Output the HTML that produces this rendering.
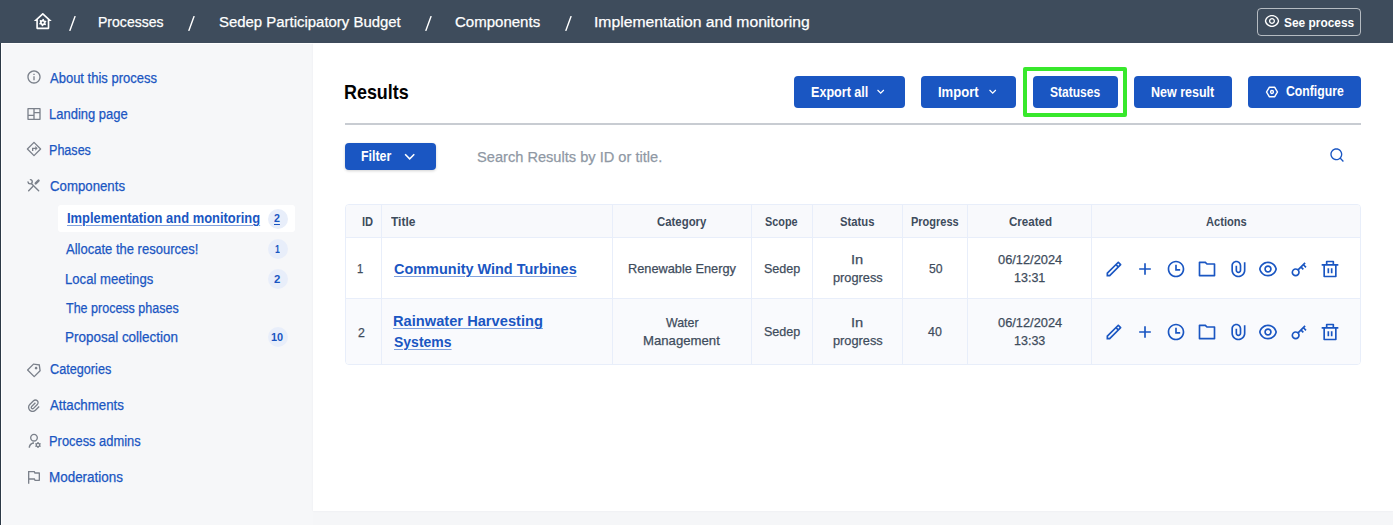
<!DOCTYPE html><html><head><meta charset="utf-8"><style>
html,body{margin:0;padding:0;width:1393px;height:525px;overflow:hidden;background:#f5f6f8;font-family:"Liberation Sans",sans-serif;}
.t{position:absolute;white-space:nowrap;line-height:1;transform-origin:0 0;display:block;-webkit-text-stroke:0.25px currentColor;}
.ic{position:absolute;display:block;}
.box{position:absolute;box-sizing:border-box;}
</style></head><body>
<div class="box" style="left:0;top:0;width:1393px;height:43px;background:#3e4c5c"></div>
<div class="box" style="left:0;top:43px;width:1px;height:482px;background:#2c3947"></div>
<div class="box" style="left:1px;top:43px;width:1px;height:482px;background:#fff"></div>
<div class="box" style="left:1px;top:43px;width:1392px;height:1px;background:#fff"></div>
<div class="box" style="left:2px;top:44px;width:311px;height:481px;background:#f6f7f9"></div>
<div class="box" style="left:313px;top:43px;width:1080px;height:468px;background:#fff;box-shadow:0 0 2px rgba(40,50,70,.06)"></div>
<div class="box" style="left:1256.5px;top:7.5px;width:104.5px;height:28.5px;border:1px solid rgba(255,255,255,.62);border-radius:4px"></div>
<div class="box" style="left:58px;top:205px;width:237px;height:27px;background:#fff;border-radius:3px"></div>
<div class="box" style="left:267.5px;top:208.5px;width:20px;height:20px;border-radius:50%;background:#e8eefa"></div>
<div class="box" style="left:267.5px;top:238.5px;width:20px;height:20px;border-radius:50%;background:#e8eefa"></div>
<div class="box" style="left:267.5px;top:268.5px;width:20px;height:20px;border-radius:50%;background:#e8eefa"></div>
<div class="box" style="left:267.5px;top:326.5px;width:20px;height:20px;border-radius:50%;background:#e8eefa"></div>
<div class="box" style="left:344.5px;top:123px;width:1016.5px;height:2px;background:#c8ccd2"></div>
<div class="box" style="left:794px;top:75.5px;width:111px;height:32px;background:#1a56c2;border-radius:4px"></div>
<div class="box" style="left:921px;top:75.5px;width:95px;height:32px;background:#1a56c2;border-radius:4px"></div>
<div class="box" style="left:1032.5px;top:75.5px;width:85px;height:32px;background:#1a56c2;border-radius:4px"></div>
<div class="box" style="left:1133.5px;top:75.5px;width:98.5px;height:32px;background:#1a56c2;border-radius:4px"></div>
<div class="box" style="left:1248px;top:75.5px;width:113px;height:32px;background:#1a56c2;border-radius:4px"></div>
<div class="box" style="left:1023px;top:67px;width:104px;height:50px;border:4px solid #38e82c;border-radius:2px"></div>
<div class="box" style="left:344.5px;top:142.7px;width:91.5px;height:27.5px;background:#1a56c2;border-radius:4px;box-shadow:0 1px 3px rgba(0,0,0,.18)"></div>
<div class="box" style="left:345px;top:204px;width:1016px;height:161px;border:1px solid #e8eefa;border-radius:4px;background:#fff;overflow:hidden">
<div class="box" style="left:0;top:0;width:100%;height:32px;background:#f8f9fc"></div>
<div class="box" style="left:0;top:94px;width:100%;height:66px;background:#f9fafd"></div>
<div class="box" style="left:0;top:32px;width:100%;height:1px;background:#e8eefa"></div>
<div class="box" style="left:0;top:93px;width:100%;height:1px;background:#e8eefa"></div>
<div class="box" style="left:35px;top:0;width:1px;height:100%;background:#e8eefa"></div>
<div class="box" style="left:266px;top:0;width:1px;height:100%;background:#e8eefa"></div>
<div class="box" style="left:405px;top:0;width:1px;height:100%;background:#e8eefa"></div>
<div class="box" style="left:466px;top:0;width:1px;height:100%;background:#e8eefa"></div>
<div class="box" style="left:556px;top:0;width:1px;height:100%;background:#e8eefa"></div>
<div class="box" style="left:621px;top:0;width:1px;height:100%;background:#e8eefa"></div>
<div class="box" style="left:745px;top:0;width:1px;height:100%;background:#e8eefa"></div>
</div>
<svg class="ic" style="left:26px;top:69.4px;width:16px;height:16px;" viewBox="0 0 24 24"><path fill="#7b818b" d="M12 22C6.47715 22 2 17.5228 2 12C2 6.47715 6.47715 2 12 2C17.5228 2 22 6.47715 22 12C22 17.5228 17.5228 22 12 22ZM12 20C16.4183 20 20 16.4183 20 12C20 7.58172 16.4183 4 12 4C7.58172 4 4 7.58172 4 12C4 16.4183 7.58172 20 12 20ZM11 7H13V9H11V7ZM11 11H13V17H11V11Z"/></svg>
<svg class="ic" style="left:25.7px;top:106px;width:16px;height:16px;" viewBox="0 0 24 24"><path fill="#7b818b" d="M22 20C22 20.5523 21.5523 21 21 21H3C2.44772 21 2 20.5523 2 20V4C2 3.44772 2.44772 3 3 3H21C21.5523 3 22 3.44772 22 4V20ZM11 15H4V19H11V15ZM20 11H13V19H20V11ZM11 5H4V13H11V5ZM20 5H13V9H20V5Z"/></svg>
<svg class="ic" style="left:26px;top:141.4px;width:16px;height:16px;" viewBox="0 0 24 24"><path fill="#7b818b" d="M9 10H14V7.5L17.5 11L14 14.5V12H11V15H9V10Z M12.7071 1.39355L22.6066 11.2931C22.9971 11.6836 22.9971 12.3168 22.6066 12.7073L12.7071 22.6068C12.3166 22.9973 11.6834 22.9973 11.2929 22.6068L1.39339 12.7073C1.00287 12.3168 1.00287 11.6836 1.39339 11.2931L11.2929 1.39355C11.6834 1.00303 12.3166 1.00303 12.7071 1.39355ZM12 3.51487L3.51472 12.0002L12 20.4854L20.4853 12.0002L12 3.51487Z"/></svg>
<svg class="ic" style="left:26px;top:177px;width:16px;height:16px" viewBox="0 0 24 24"><g fill="none" stroke="#7b818b" stroke-width="2.1" stroke-linecap="round"><path d="M8.3 10.3L19 20.8"/><path d="M6.6 3.9A3.2 3.2 0 1 1 3 7.4"/><path d="M4 20.5L10.2 14.3"/><path d="M14.6 9.6L18.8 5.4" stroke-width="3.6"/></g></svg>
<svg class="ic" style="left:26px;top:361.5px;width:16px;height:16px;" viewBox="0 0 24 24"><path fill="#7b818b" d="M10.9042 2.1001L20.8037 3.51431L22.2179 13.4138L13.0255 22.6062C12.635 22.9967 12.0019 22.9967 11.6113 22.6062L1.71184 12.7067C1.32131 12.3162 1.32131 11.683 1.71184 11.2925L10.9042 2.1001ZM11.6113 4.22142L3.83316 11.9996L12.3184 20.4849L20.0966 12.7067L19.036 5.28208L11.6113 4.22142ZM13.7327 10.5854C12.9516 9.80433 12.9516 8.538 13.7327 7.75695C14.5137 6.9759 15.78 6.9759 16.5611 7.75695C17.3421 8.538 17.3421 9.80433 16.5611 10.5854C15.78 11.3664 14.5137 11.3664 13.7327 10.5854Z"/></svg>
<svg class="ic" style="left:26px;top:397.5px;width:16px;height:16px;" viewBox="0 0 24 24"><path fill="#7b818b" d="M14.8287 7.75737L9.1718 13.4142C8.78127 13.8047 8.78127 14.4379 9.1718 14.8284C9.56232 15.219 10.1955 15.219 10.586 14.8284L16.2429 9.17158C17.4144 8.00001 17.4144 6.10052 16.2429 4.92894C15.0713 3.75737 13.1718 3.75737 12.0002 4.92894L6.34337 10.5858C4.39075 12.5384 4.39075 15.7042 6.34337 17.6569C8.29599 19.6095 11.4618 19.6095 13.4144 17.6569L19.0713 12L20.4855 13.4142L14.8287 19.0711C12.095 21.8047 7.66283 21.8047 4.92916 19.0711C2.19549 16.3374 2.19549 11.9053 4.92916 9.17158L10.586 3.51473C12.5386 1.56211 15.7045 1.56211 17.6571 3.51473C19.6097 5.46735 19.6097 8.63317 17.6571 10.5858L12.0002 16.2427C10.8287 17.4142 8.92916 17.4142 7.75759 16.2427C6.58601 15.0711 6.58601 13.1716 7.75759 12L13.4144 6.34316L14.8287 7.75737Z"/></svg>
<svg class="ic" style="left:26px;top:433.4px;width:16px;height:16px;" viewBox="0 0 24 24"><path fill="#7b818b" d="M12 14V16C8.68629 16 6 18.6863 6 22H4C4 17.5817 7.58172 14 12 14ZM12 13C8.685 13 6 10.315 6 7C6 3.685 8.685 1 12 1C15.315 1 18 3.685 18 7C18 10.315 15.315 13 12 13ZM12 11C14.21 11 16 9.21 16 7C16 4.79 14.21 3 12 3C9.79 3 8 4.79 8 7C8 9.21 9.79 11 12 11ZM14.5946 18.8115C14.5327 18.5511 14.5 18.2794 14.5 18C14.5 17.7207 14.5327 17.449 14.5945 17.1886L13.6029 16.6161L14.6029 14.884L15.5952 15.4569C15.9883 15.0851 16.4676 14.8034 17 14.6449V13.5H19V14.6449C19.5324 14.8034 20.0116 15.0851 20.4047 15.4569L21.3971 14.8839L22.3972 16.616L21.4055 17.1885C21.4673 17.449 21.5 17.7207 21.5 18C21.5 18.2793 21.4673 18.551 21.4055 18.8114L22.3972 19.3839L21.3972 21.116L20.4048 20.543C20.0117 20.9149 19.5325 21.1966 19.0001 21.355V22.5H17.0001V21.3551C16.4677 21.1967 15.9884 20.915 15.5953 20.5431L14.603 21.1161L13.6029 19.384L14.5946 18.8115ZM18 19.5C18.8284 19.5 19.5 18.8284 19.5 18C19.5 17.1716 18.8284 16.5 18 16.5C17.1716 16.5 16.5 17.1716 16.5 18C16.5 18.8284 17.1716 19.5 18 19.5Z"/></svg>
<svg class="ic" style="left:26px;top:469px;width:16px;height:16px;" viewBox="0 0 24 24"><path fill="#7b818b" d="M5 16V22H3V3H12.382C12.7607 3 13.107 3.214 13.2764 3.55279L14 5H20C20.5523 5 21 5.44772 21 6V17C21 17.5523 20.5523 18 20 18H13.618C13.2393 18 12.893 17.786 12.7236 17.4472L12 16H5ZM5 5V14H13.2361L14.2361 16H19V7H12.7639L11.7639 5H5Z"/></svg>
<svg class="ic" style="left:1328.9px;top:146.7px;width:16px;height:16px;" viewBox="0 0 24 24"><path fill="#1a56c2" d="M18.031 16.6168L22.3137 20.8995L20.8995 22.3137L16.6168 18.031C15.0769 19.263 13.124 20 11 20C6.032 20 2 15.968 2 11C2 6.032 6.032 2 11 2C15.968 2 20 6.032 20 11C20 13.124 19.263 15.0769 18.031 16.6168ZM16.0247 15.8748C17.2475 14.6146 18 12.8956 18 11C18 7.1325 14.8675 4 11 4C7.1325 4 4 7.1325 4 11C4 14.8675 7.1325 18 11 18C12.8956 18 14.6146 17.2475 15.8748 16.0247L16.0247 15.8748Z"/></svg>
<svg class="ic" style="left:1263.6px;top:13.2px;width:16px;height:16px;" viewBox="0 0 24 24"><path fill="#fff" d="M12.0003 3C17.3924 3 21.8784 6.87976 22.8189 12C21.8784 17.1202 17.3924 21 12.0003 21C6.60812 21 2.12215 17.1202 1.18164 12C2.12215 6.87976 6.60812 3 12.0003 3ZM12.0003 19C16.2359 19 19.8603 16.052 20.7777 12C19.8603 7.94803 16.2359 5 12.0003 5C7.7646 5 4.14022 7.94803 3.22278 12C4.14022 16.052 7.7646 19 12.0003 19ZM12.0003 16.5C9.51498 16.5 7.50026 14.4853 7.50026 12C7.50026 9.51472 9.51498 7.5 12.0003 7.5C14.4855 7.5 16.5003 9.51472 16.5003 12C16.5003 14.4853 14.4855 16.5 12.0003 16.5ZM12.0003 14.5C13.381 14.5 14.5003 13.3807 14.5003 12C14.5003 10.6193 13.381 9.5 12.0003 9.5C10.6196 9.5 9.50026 10.6193 9.50026 12C9.50026 13.3807 10.6196 14.5 12.0003 14.5Z"/></svg>
<svg class="ic" style="left:874.4px;top:84.7px;width:13.4px;height:13.4px;" viewBox="0 0 24 24"><path fill="#fff" d="M12 13.1717L16.9497 8.22192L18.3639 9.63614L12 16.0001L5.63604 9.63614L7.05025 8.22192L12 13.1717Z"/></svg>
<svg class="ic" style="left:985.6px;top:84.7px;width:13.4px;height:13.4px;" viewBox="0 0 24 24"><path fill="#fff" d="M12 13.1717L16.9497 8.22192L18.3639 9.63614L12 16.0001L5.63604 9.63614L7.05025 8.22192L12 13.1717Z"/></svg>
<svg class="ic" style="left:400.4px;top:146.6px;width:19.4px;height:19.4px;" viewBox="0 0 24 24"><path fill="#fff" d="M12 13.1717L16.9497 8.22192L18.3639 9.63614L12 16.0001L5.63604 9.63614L7.05025 8.22192L12 13.1717Z"/></svg>
<svg class="ic" style="left:68.8px;top:15.5px;width:7px;height:16px" viewBox="0 0 7 16"><path d="M0.9 14.4L6.0 0.6" stroke="#fff" stroke-width="1.4" stroke-linecap="round" fill="none"/></svg>
<svg class="ic" style="left:188.4px;top:15.5px;width:7px;height:16px" viewBox="0 0 7 16"><path d="M0.9 14.4L6.0 0.6" stroke="#fff" stroke-width="1.4" stroke-linecap="round" fill="none"/></svg>
<svg class="ic" style="left:424.8px;top:15.5px;width:7px;height:16px" viewBox="0 0 7 16"><path d="M0.9 14.4L6.0 0.6" stroke="#fff" stroke-width="1.4" stroke-linecap="round" fill="none"/></svg>
<svg class="ic" style="left:565px;top:15.5px;width:7px;height:16px" viewBox="0 0 7 16"><path d="M0.9 14.4L6.0 0.6" stroke="#fff" stroke-width="1.4" stroke-linecap="round" fill="none"/></svg>
<svg class="ic" style="left:33.2px;top:11.5px;width:19.6px;height:19.6px" viewBox="0 0 24 24"><path fill="#fff" fill-rule="evenodd" d="M19 21H5C4.45 21 4 20.55 4 20V11H1L11.33 1.61C11.71 1.26 12.29 1.26 12.67 1.61L23 11H20V20C20 20.55 19.55 21 19 21ZM6 19H18V9.16L12 3.7L6 9.16V19Z"/><path fill="#fff" fill-rule="evenodd" d="M12.00 8.40L13.19 8.56L13.70 10.06L14.40 10.60L15.98 10.70L16.44 11.81L15.40 13.00L15.28 13.88L15.98 15.30L15.25 16.25L13.70 15.94L12.88 16.28L12.00 17.60L10.81 17.44L10.30 15.94L9.60 15.40L8.02 15.30L7.56 14.19L8.60 13.00L8.72 12.12L8.02 10.70L8.75 9.75L10.30 10.06L11.12 9.72ZM13.3 13.0A1.3 1.3 0 1 0 10.7 13.0A1.3 1.3 0 1 0 13.3 13.0Z"/></svg>
<svg class="ic" style="left:1264px;top:83.5px;width:16px;height:16px" viewBox="0 0 24 24"><path d="M20.20 12.00L16.10 19.10L7.90 19.10L3.80 12.00L7.90 4.90L16.10 4.90Z" fill="none" stroke="#fff" stroke-width="2.2" stroke-linejoin="round"/><circle cx="12" cy="12" r="2.2" fill="none" stroke="#fff" stroke-width="2"/></svg>
<svg class="ic" style="left:1104.3px;top:259.35px;width:20px;height:20px;" viewBox="0 0 24 24"><path fill="#1a56c2" d="M15.7279 9.57627L14.3137 8.16206L5 17.4758V18.89H6.41421L15.7279 9.57627ZM17.1421 8.16206L18.5563 6.74785L17.1421 5.33363L15.7279 6.74785L17.1421 8.16206ZM7.24264 20.89H3V16.6473L16.435 3.21231C16.8256 2.82179 17.4587 2.82179 17.8492 3.21231L20.6777 6.04074C21.0682 6.43126 21.0682 7.06443 20.6777 7.45495L7.24264 20.89Z"/></svg>
<svg class="ic" style="left:1104.3px;top:322.3px;width:20px;height:20px;" viewBox="0 0 24 24"><path fill="#1a56c2" d="M15.7279 9.57627L14.3137 8.16206L5 17.4758V18.89H6.41421L15.7279 9.57627ZM17.1421 8.16206L18.5563 6.74785L17.1421 5.33363L15.7279 6.74785L17.1421 8.16206ZM7.24264 20.89H3V16.6473L16.435 3.21231C16.8256 2.82179 17.4587 2.82179 17.8492 3.21231L20.6777 6.04074C21.0682 6.43126 21.0682 7.06443 20.6777 7.45495L7.24264 20.89Z"/></svg>
<svg class="ic" style="left:1135.1px;top:259.35px;width:20px;height:20px;" viewBox="0 0 24 24"><path fill="#1a56c2" d="M11 11V5H13V11H19V13H13V19H11V13H5V11H11Z"/></svg>
<svg class="ic" style="left:1135.1px;top:322.3px;width:20px;height:20px;" viewBox="0 0 24 24"><path fill="#1a56c2" d="M11 11V5H13V11H19V13H13V19H11V13H5V11H11Z"/></svg>
<svg class="ic" style="left:1165.8999999999999px;top:259.35px;width:20px;height:20px;" viewBox="0 0 24 24"><path fill="#1a56c2" d="M12 22C6.47715 22 2 17.5228 2 12C2 6.47715 6.47715 2 12 2C17.5228 2 22 6.47715 22 12C22 17.5228 17.5228 22 12 22ZM12 20C16.4183 20 20 16.4183 20 12C20 7.58172 16.4183 4 12 4C7.58172 4 4 7.58172 4 12C4 16.4183 7.58172 20 12 20ZM13 12H17V14H11V7H13V12Z"/></svg>
<svg class="ic" style="left:1165.8999999999999px;top:322.3px;width:20px;height:20px;" viewBox="0 0 24 24"><path fill="#1a56c2" d="M12 22C6.47715 22 2 17.5228 2 12C2 6.47715 6.47715 2 12 2C17.5228 2 22 6.47715 22 12C22 17.5228 17.5228 22 12 22ZM12 20C16.4183 20 20 16.4183 20 12C20 7.58172 16.4183 4 12 4C7.58172 4 4 7.58172 4 12C4 16.4183 7.58172 20 12 20ZM13 12H17V14H11V7H13V12Z"/></svg>
<svg class="ic" style="left:1196.7px;top:259.35px;width:20px;height:20px;" viewBox="0 0 24 24"><path fill="#1a56c2" d="M4 5V19H20V7H11.5858L9.58579 5H4ZM12.4142 5H21C21.5523 5 22 5.44772 22 6V20C22 20.5523 21.5523 21 21 21H3C2.44772 21 2 20.5523 2 20V4C2 3.44772 2.44772 3 3 3H10.4142L12.4142 5Z"/></svg>
<svg class="ic" style="left:1196.7px;top:322.3px;width:20px;height:20px;" viewBox="0 0 24 24"><path fill="#1a56c2" d="M4 5V19H20V7H11.5858L9.58579 5H4ZM12.4142 5H21C21.5523 5 22 5.44772 22 6V20C22 20.5523 21.5523 21 21 21H3C2.44772 21 2 20.5523 2 20V4C2 3.44772 2.44772 3 3 3H10.4142L12.4142 5Z"/></svg>
<svg class="ic" style="left:1227.5px;top:259.35px;width:20px;height:20px;" viewBox="0 0 24 24"><path fill="#1a56c2" d="M14 13.5V8C14 5.79086 12.2091 4 10 4C7.79086 4 6 5.79086 6 8V13.5C6 17.0899 8.91015 20 12.5 20C16.0899 20 19 17.0899 19 13.5V4H21V13.5C21 18.1944 17.1944 22 12.5 22C7.80558 22 4 18.1944 4 13.5V8C4 4.68629 6.68629 2 10 2C13.3137 2 16 4.68629 16 8V13.5C16 15.433 14.433 17 12.5 17C10.567 17 9 15.433 9 13.5V8H11V13.5C11 14.3284 11.6716 15 12.5 15C13.3284 15 14 14.3284 14 13.5Z"/></svg>
<svg class="ic" style="left:1227.5px;top:322.3px;width:20px;height:20px;" viewBox="0 0 24 24"><path fill="#1a56c2" d="M14 13.5V8C14 5.79086 12.2091 4 10 4C7.79086 4 6 5.79086 6 8V13.5C6 17.0899 8.91015 20 12.5 20C16.0899 20 19 17.0899 19 13.5V4H21V13.5C21 18.1944 17.1944 22 12.5 22C7.80558 22 4 18.1944 4 13.5V8C4 4.68629 6.68629 2 10 2C13.3137 2 16 4.68629 16 8V13.5C16 15.433 14.433 17 12.5 17C10.567 17 9 15.433 9 13.5V8H11V13.5C11 14.3284 11.6716 15 12.5 15C13.3284 15 14 14.3284 14 13.5Z"/></svg>
<svg class="ic" style="left:1258.3px;top:259.35px;width:20px;height:20px;" viewBox="0 0 24 24"><path fill="#1a56c2" d="M12.0003 3C17.3924 3 21.8784 6.87976 22.8189 12C21.8784 17.1202 17.3924 21 12.0003 21C6.60812 21 2.12215 17.1202 1.18164 12C2.12215 6.87976 6.60812 3 12.0003 3ZM12.0003 19C16.2359 19 19.8603 16.052 20.7777 12C19.8603 7.94803 16.2359 5 12.0003 5C7.7646 5 4.14022 7.94803 3.22278 12C4.14022 16.052 7.7646 19 12.0003 19ZM12.0003 16.5C9.51498 16.5 7.50026 14.4853 7.50026 12C7.50026 9.51472 9.51498 7.5 12.0003 7.5C14.4855 7.5 16.5003 9.51472 16.5003 12C16.5003 14.4853 14.4855 16.5 12.0003 16.5ZM12.0003 14.5C13.381 14.5 14.5003 13.3807 14.5003 12C14.5003 10.6193 13.381 9.5 12.0003 9.5C10.6196 9.5 9.50026 10.6193 9.50026 12C9.50026 13.3807 10.6196 14.5 12.0003 14.5Z"/></svg>
<svg class="ic" style="left:1258.3px;top:322.3px;width:20px;height:20px;" viewBox="0 0 24 24"><path fill="#1a56c2" d="M12.0003 3C17.3924 3 21.8784 6.87976 22.8189 12C21.8784 17.1202 17.3924 21 12.0003 21C6.60812 21 2.12215 17.1202 1.18164 12C2.12215 6.87976 6.60812 3 12.0003 3ZM12.0003 19C16.2359 19 19.8603 16.052 20.7777 12C19.8603 7.94803 16.2359 5 12.0003 5C7.7646 5 4.14022 7.94803 3.22278 12C4.14022 16.052 7.7646 19 12.0003 19ZM12.0003 16.5C9.51498 16.5 7.50026 14.4853 7.50026 12C7.50026 9.51472 9.51498 7.5 12.0003 7.5C14.4855 7.5 16.5003 9.51472 16.5003 12C16.5003 14.4853 14.4855 16.5 12.0003 16.5ZM12.0003 14.5C13.381 14.5 14.5003 13.3807 14.5003 12C14.5003 10.6193 13.381 9.5 12.0003 9.5C10.6196 9.5 9.50026 10.6193 9.50026 12C9.50026 13.3807 10.6196 14.5 12.0003 14.5Z"/></svg>
<svg class="ic" style="left:1289.1px;top:259.35px;width:20px;height:20px;" viewBox="0 0 24 24"><path fill="#1a56c2" d="M10.7577 11.8281L18.6066 3.97919L20.0208 5.3934L18.6066 6.80761L21.0815 9.28249L19.6673 10.6967L17.1924 8.22183L15.7782 9.63604L17.8995 11.7574L16.4853 13.1716L14.364 11.0503L12.1719 13.2423C13.4581 15.1837 13.246 17.8251 11.5355 19.5355C9.58291 21.4882 6.41709 21.4882 4.46447 19.5355C2.51184 17.5829 2.51184 14.4171 4.46447 12.4645C6.17493 10.754 8.81633 10.5419 10.7577 11.8281ZM10.1213 18.1213C11.2929 16.9497 11.2929 15.0503 10.1213 13.8787C8.94975 12.7071 7.05025 12.7071 5.87868 13.8787C4.70711 15.0503 4.70711 16.9497 5.87868 18.1213C7.05025 19.2929 8.94975 19.2929 10.1213 18.1213Z"/></svg>
<svg class="ic" style="left:1289.1px;top:322.3px;width:20px;height:20px;" viewBox="0 0 24 24"><path fill="#1a56c2" d="M10.7577 11.8281L18.6066 3.97919L20.0208 5.3934L18.6066 6.80761L21.0815 9.28249L19.6673 10.6967L17.1924 8.22183L15.7782 9.63604L17.8995 11.7574L16.4853 13.1716L14.364 11.0503L12.1719 13.2423C13.4581 15.1837 13.246 17.8251 11.5355 19.5355C9.58291 21.4882 6.41709 21.4882 4.46447 19.5355C2.51184 17.5829 2.51184 14.4171 4.46447 12.4645C6.17493 10.754 8.81633 10.5419 10.7577 11.8281ZM10.1213 18.1213C11.2929 16.9497 11.2929 15.0503 10.1213 13.8787C8.94975 12.7071 7.05025 12.7071 5.87868 13.8787C4.70711 15.0503 4.70711 16.9497 5.87868 18.1213C7.05025 19.2929 8.94975 19.2929 10.1213 18.1213Z"/></svg>
<svg class="ic" style="left:1319.8999999999999px;top:259.35px;width:20px;height:20px;" viewBox="0 0 24 24"><path fill="#1a56c2" d="M17 6H22V8H20V21C20 21.5523 19.5523 22 19 22H5C4.44772 22 4 21.5523 4 21V8H2V6H7V3C7 2.44772 7.44772 2 8 2H16C16.5523 2 17 2.44772 17 3V6ZM18 8H6V20H18V8ZM9 11H11V17H9V11ZM13 11H15V17H13V11ZM9 4V6H15V4H9Z"/></svg>
<svg class="ic" style="left:1319.8999999999999px;top:322.3px;width:20px;height:20px;" viewBox="0 0 24 24"><path fill="#1a56c2" d="M17 6H22V8H20V21C20 21.5523 19.5523 22 19 22H5C4.44772 22 4 21.5523 4 21V8H2V6H7V3C7 2.44772 7.44772 2 8 2H16C16.5523 2 17 2.44772 17 3V6ZM18 8H6V20H18V8ZM9 11H11V17H9V11ZM13 11H15V17H13V11ZM9 4V6H15V4H9Z"/></svg>
<span id="h_proc" class="t" style="left:98.49px;top:14.35px;font-size:15.5px;font-weight:400;color:#fff;transform:scaleX(0.9063);">Processes</span>
<span id="h_sedep" class="t" style="left:218.60px;top:14.35px;font-size:15.5px;font-weight:400;color:#fff;transform:scaleX(0.9631);">Sedep Participatory Budget</span>
<span id="h_comp" class="t" style="left:455.00px;top:14.35px;font-size:15.5px;font-weight:400;color:#fff;transform:scaleX(0.9690);">Components</span>
<span id="h_impl" class="t" style="left:593.99px;top:14.35px;font-size:15.5px;font-weight:400;color:#fff;transform:scaleX(1.0133);">Implementation and monitoring</span>
<span id="h_see" class="t" style="left:1284.00px;top:15.60px;font-size:13px;font-weight:700;color:#fff;transform:scaleX(0.9165);-webkit-text-stroke:0px;">See process</span>
<span id="s_about" class="t" style="left:50.20px;top:70.60px;font-size:14px;font-weight:400;color:#1a56c2;transform:scaleX(0.9290);">About this process</span>
<span id="s_land" class="t" style="left:49.27px;top:106.60px;font-size:14px;font-weight:400;color:#1a56c2;transform:scaleX(0.9277);">Landing page</span>
<span id="s_phase" class="t" style="left:49.30px;top:142.60px;font-size:14px;font-weight:400;color:#1a56c2;transform:scaleX(0.8972);">Phases</span>
<span id="s_comp" class="t" style="left:50.20px;top:178.60px;font-size:14px;font-weight:400;color:#1a56c2;transform:scaleX(0.9448);">Components</span>
<span id="s_cat" class="t" style="left:50.20px;top:362.30px;font-size:14px;font-weight:400;color:#1a56c2;transform:scaleX(0.9054);">Categories</span>
<span id="s_att" class="t" style="left:50.20px;top:398.00px;font-size:14px;font-weight:400;color:#1a56c2;transform:scaleX(0.9497);">Attachments</span>
<span id="s_adm" class="t" style="left:49.28px;top:434.30px;font-size:14px;font-weight:400;color:#1a56c2;transform:scaleX(0.9199);">Process admins</span>
<span id="s_mod" class="t" style="left:49.24px;top:470.00px;font-size:14px;font-weight:400;color:#1a56c2;transform:scaleX(0.9600);">Moderations</span>
<span id="ss_impl" class="t" style="left:66.60px;top:210.80px;font-size:14px;font-weight:700;color:#1a56c2;transform:scaleX(0.9230);-webkit-text-stroke:0px;text-decoration:underline;text-decoration-thickness:1px;text-underline-offset:2px;text-decoration-color:rgba(26,86,194,.55);">Implementation and monitoring</span>
<span id="ss_alloc" class="t" style="left:66.40px;top:241.60px;font-size:14px;font-weight:400;color:#1a56c2;transform:scaleX(0.9292);">Allocate the resources!</span>
<span id="ss_local" class="t" style="left:65.46px;top:271.70px;font-size:14px;font-weight:400;color:#1a56c2;transform:scaleX(0.9370);">Local meetings</span>
<span id="ss_phases" class="t" style="left:66.40px;top:300.80px;font-size:14px;font-weight:400;color:#1a56c2;transform:scaleX(0.8940);">The process phases</span>
<span id="ss_prop" class="t" style="left:65.44px;top:329.70px;font-size:14px;font-weight:400;color:#1a56c2;transform:scaleX(0.9618);">Proposal collection</span>
<span id="b1" class="t" style="left:274.10px;top:213.45px;font-size:10.5px;font-weight:700;color:#1a56c2;transform:scaleX(1.0167);-webkit-text-stroke:0px;text-decoration:underline;text-decoration-thickness:1px;text-underline-offset:1.5px;">2</span>
<span id="b2" class="t" style="left:274.90px;top:243.65px;font-size:10.5px;font-weight:700;color:#1a56c2;transform:scaleX(0.8333);-webkit-text-stroke:0px;">1</span>
<span id="b3" class="t" style="left:274.00px;top:273.55px;font-size:10.5px;font-weight:700;color:#1a56c2;transform:scaleX(1.0833);-webkit-text-stroke:0px;">2</span>
<span id="b4" class="t" style="left:271.40px;top:331.95px;font-size:10.5px;font-weight:700;color:#1a56c2;transform:scaleX(1.0389);-webkit-text-stroke:0px;">10</span>
<span id="m_results" class="t" style="left:344.33px;top:81.55px;font-size:20.5px;font-weight:700;color:#020203;transform:scaleX(0.8740);-webkit-text-stroke:0px;">Results</span>
<span id="m_filter" class="t" style="left:361.00px;top:149.20px;font-size:14px;font-weight:700;color:#fff;transform:scaleX(0.8856);-webkit-text-stroke:0px;">Filter</span>
<span id="m_search" class="t" style="left:476.60px;top:149.35px;font-size:15.5px;font-weight:400;color:#8f98a4;transform:scaleX(0.9431);">Search Results by ID or title.</span>
<span id="btn_export" class="t" style="left:811.40px;top:84.80px;font-size:14px;font-weight:700;color:#fff;transform:scaleX(0.8982);-webkit-text-stroke:0px;">Export all</span>
<span id="btn_import" class="t" style="left:938.30px;top:84.80px;font-size:14px;font-weight:700;color:#fff;transform:scaleX(0.9319);-webkit-text-stroke:0px;">Import</span>
<span id="btn_status" class="t" style="left:1050.00px;top:84.80px;font-size:14px;font-weight:700;color:#fff;transform:scaleX(0.8588);-webkit-text-stroke:0px;">Statuses</span>
<span id="btn_new" class="t" style="left:1151.20px;top:84.80px;font-size:14px;font-weight:700;color:#fff;transform:scaleX(0.8926);-webkit-text-stroke:0px;">New result</span>
<span id="btn_conf" class="t" style="left:1285.70px;top:84.20px;font-size:14px;font-weight:700;color:#fff;transform:scaleX(0.8731);-webkit-text-stroke:0px;">Configure</span>
<span id="th_id" class="t" style="left:361.60px;top:215.65px;font-size:12.5px;font-weight:700;color:#3e4c5c;transform:scaleX(0.8899);-webkit-text-stroke:0px;">ID</span>
<span id="th_title" class="t" style="left:390.70px;top:215.65px;font-size:12.5px;font-weight:700;color:#3e4c5c;transform:scaleX(0.9601);-webkit-text-stroke:0px;">Title</span>
<span id="th_cat" class="t" style="left:657.40px;top:215.65px;font-size:12.5px;font-weight:700;color:#3e4c5c;transform:scaleX(0.9110);-webkit-text-stroke:0px;">Category</span>
<span id="th_scope" class="t" style="left:765.30px;top:215.65px;font-size:12.5px;font-weight:700;color:#3e4c5c;transform:scaleX(0.8706);-webkit-text-stroke:0px;">Scope</span>
<span id="th_status" class="t" style="left:840.30px;top:215.65px;font-size:12.5px;font-weight:700;color:#3e4c5c;transform:scaleX(0.9020);-webkit-text-stroke:0px;">Status</span>
<span id="th_prog" class="t" style="left:911.30px;top:215.65px;font-size:12.5px;font-weight:700;color:#3e4c5c;transform:scaleX(0.8794);-webkit-text-stroke:0px;">Progress</span>
<span id="th_created" class="t" style="left:1008.50px;top:215.65px;font-size:12.5px;font-weight:700;color:#3e4c5c;transform:scaleX(0.9257);-webkit-text-stroke:0px;">Created</span>
<span id="th_actions" class="t" style="left:1205.60px;top:215.65px;font-size:12.5px;font-weight:700;color:#3e4c5c;transform:scaleX(0.8892);-webkit-text-stroke:0px;">Actions</span>
<span id="r1_id" class="t" style="left:357.17px;top:262.45px;font-size:13.5px;font-weight:400;color:#3e4c5c;transform:scaleX(0.8333);">1</span>
<span id="r1_title" class="t" style="left:394.30px;top:260.65px;font-size:15.5px;font-weight:700;color:#1a56c2;transform:scaleX(0.9325);-webkit-text-stroke:0px;text-decoration:underline;text-decoration-thickness:1px;text-underline-offset:2px;text-decoration-color:rgba(26,86,194,.55);">Community Wind Turbines</span>
<span id="r1_cat" class="t" style="left:627.55px;top:262.15px;font-size:13.5px;font-weight:400;color:#3e4c5c;transform:scaleX(0.9460);">Renewable Energy</span>
<span id="r1_scope" class="t" style="left:764.00px;top:262.15px;font-size:13.5px;font-weight:400;color:#3e4c5c;transform:scaleX(0.9292);">Sedep</span>
<span id="r1_in" class="t" style="left:850.91px;top:253.25px;font-size:13.5px;font-weight:400;color:#3e4c5c;transform:scaleX(1.0871);">In</span>
<span id="r1_prog" class="t" style="left:832.50px;top:271.25px;font-size:13.5px;font-weight:400;color:#3e4c5c;transform:scaleX(0.9474);">progress</span>
<span id="r1_50" class="t" style="left:928.70px;top:262.45px;font-size:13.5px;font-weight:400;color:#3e4c5c;transform:scaleX(0.9029);">50</span>
<span id="r1_date" class="t" style="left:997.70px;top:253.15px;font-size:13.5px;font-weight:400;color:#3e4c5c;transform:scaleX(0.9507);">06/12/2024</span>
<span id="r1_time" class="t" style="left:1013.87px;top:271.05px;font-size:13.5px;font-weight:400;color:#3e4c5c;transform:scaleX(0.9264);">13:31</span>
<span id="r2_id" class="t" style="left:357.60px;top:325.75px;font-size:13.5px;font-weight:400;color:#3e4c5c;transform:scaleX(0.9143);">2</span>
<span id="r2_t1" class="t" style="left:393.35px;top:313.25px;font-size:15.5px;font-weight:700;color:#1a56c2;transform:scaleX(0.9457);-webkit-text-stroke:0px;text-decoration:underline;text-decoration-thickness:1px;text-underline-offset:2px;text-decoration-color:rgba(26,86,194,.55);">Rainwater Harvesting</span>
<span id="r2_t2" class="t" style="left:394.30px;top:333.65px;font-size:15.5px;font-weight:700;color:#1a56c2;transform:scaleX(0.9027);-webkit-text-stroke:0px;text-decoration:underline;text-decoration-thickness:1px;text-underline-offset:2px;text-decoration-color:rgba(26,86,194,.55);">Systems</span>
<span id="r2_cat1" class="t" style="left:665.70px;top:316.05px;font-size:13.5px;font-weight:400;color:#3e4c5c;transform:scaleX(0.9165);">Water</span>
<span id="r2_cat2" class="t" style="left:643.12px;top:333.95px;font-size:13.5px;font-weight:400;color:#3e4c5c;transform:scaleX(0.9750);">Management</span>
<span id="r2_scope" class="t" style="left:764.00px;top:325.05px;font-size:13.5px;font-weight:400;color:#3e4c5c;transform:scaleX(0.9292);">Sedep</span>
<span id="r2_in" class="t" style="left:850.91px;top:316.05px;font-size:13.5px;font-weight:400;color:#3e4c5c;transform:scaleX(1.0871);">In</span>
<span id="r2_prog" class="t" style="left:832.50px;top:334.05px;font-size:13.5px;font-weight:400;color:#3e4c5c;transform:scaleX(0.9474);">progress</span>
<span id="r2_40" class="t" style="left:928.40px;top:325.25px;font-size:13.5px;font-weight:400;color:#3e4c5c;transform:scaleX(0.9167);">40</span>
<span id="r2_date" class="t" style="left:997.70px;top:316.05px;font-size:13.5px;font-weight:400;color:#3e4c5c;transform:scaleX(0.9507);">06/12/2024</span>
<span id="r2_time" class="t" style="left:1013.87px;top:333.95px;font-size:13.5px;font-weight:400;color:#3e4c5c;transform:scaleX(0.9264);">13:33</span>
</body></html>
